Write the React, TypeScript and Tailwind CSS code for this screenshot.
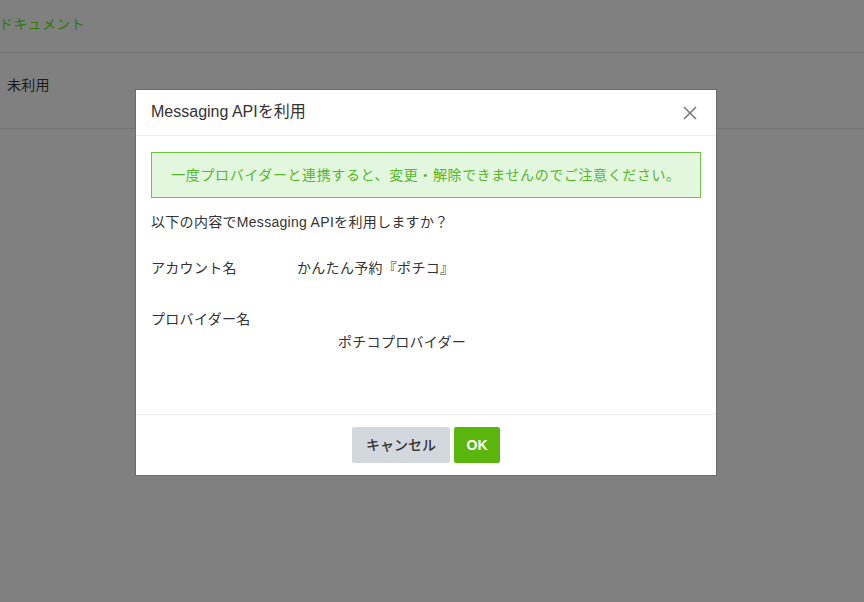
const font = "font-['Liberation_Sans','Noto_Sans_CJK_JP',sans-serif]";

const App = () => {
  return (
    <div className={`relative w-[864px] h-[602px] overflow-hidden bg-[#808080] ${font}`}>
      {/* dimmed page behind */}
      <div className="h-[53px] border-b border-[#737373] pt-[12px]">
        <span className="text-[14px] leading-[20px] tracking-[0.3px] text-[#2b7a0b] -ml-[1px]">ドキュメント</span>
      </div>
      <div className="h-[76px] border-b border-[#737373] pt-[20px] pl-[7px]">
        <span className="text-[14px] leading-[20px] tracking-[0.3px] text-[#1c1c1c]">未利用</span>
      </div>

      {/* modal */}
      <div className="absolute left-[135px] top-[89px] w-[582px] h-[387px] bg-white border border-[#6b6b6b] flex flex-col">
        <div className="h-[46px] border-b border-[#ececec] flex items-center justify-between pl-[15px] pr-[16px]">
          <span className="text-[16px] text-[#333] -mt-[1px]">Messaging APIを利用</span>
          <svg width="14" height="14" viewBox="0 0 14 14" className="mr-[3px]">
            <path d="M1 1L13 13M13 1L1 13" stroke="#7a7a7a" strokeWidth="1.6" />
          </svg>
        </div>

        <div className="flex-1 px-[15px] pt-[16px] text-[14px] leading-[20px] tracking-[0.3px] text-[#333]">
          <div className="h-[46px] border border-[#6cc644] bg-[#e2f7dd] flex items-center justify-center">
            <span className="tracking-[0.6px] text-[#57b52b]">
              一度プロバイダーと連携すると、変更・解除できませんのでご注意ください。
            </span>
          </div>
          <p className="mt-[14px]">以下の内容でMessaging APIを利用しますか？</p>
          <div className="mt-[26px] flex">
            <span className="w-[146px]">アカウント名</span>
            <span>かんたん予約『ポチコ』</span>
          </div>
          <div className="mt-[31px]">
            <div>プロバイダー名</div>
            <div className="mt-[3px] pl-[187px]">ポチコプロバイダー</div>
          </div>
        </div>

        <div className="h-[61px] border-t border-[#ececec] flex items-start justify-center gap-[4px] pt-[12px]">
          <button className="h-[36px] w-[98px] rounded-[2px] bg-[#d3d7de] text-[14px] font-medium text-[#333]">キャンセル</button>
          <button className="h-[36px] w-[46px] rounded-[2px] bg-[#5ab60d] text-[14px] font-bold text-white">OK</button>
        </div>
      </div>
    </div>
  );
};

export default App;
